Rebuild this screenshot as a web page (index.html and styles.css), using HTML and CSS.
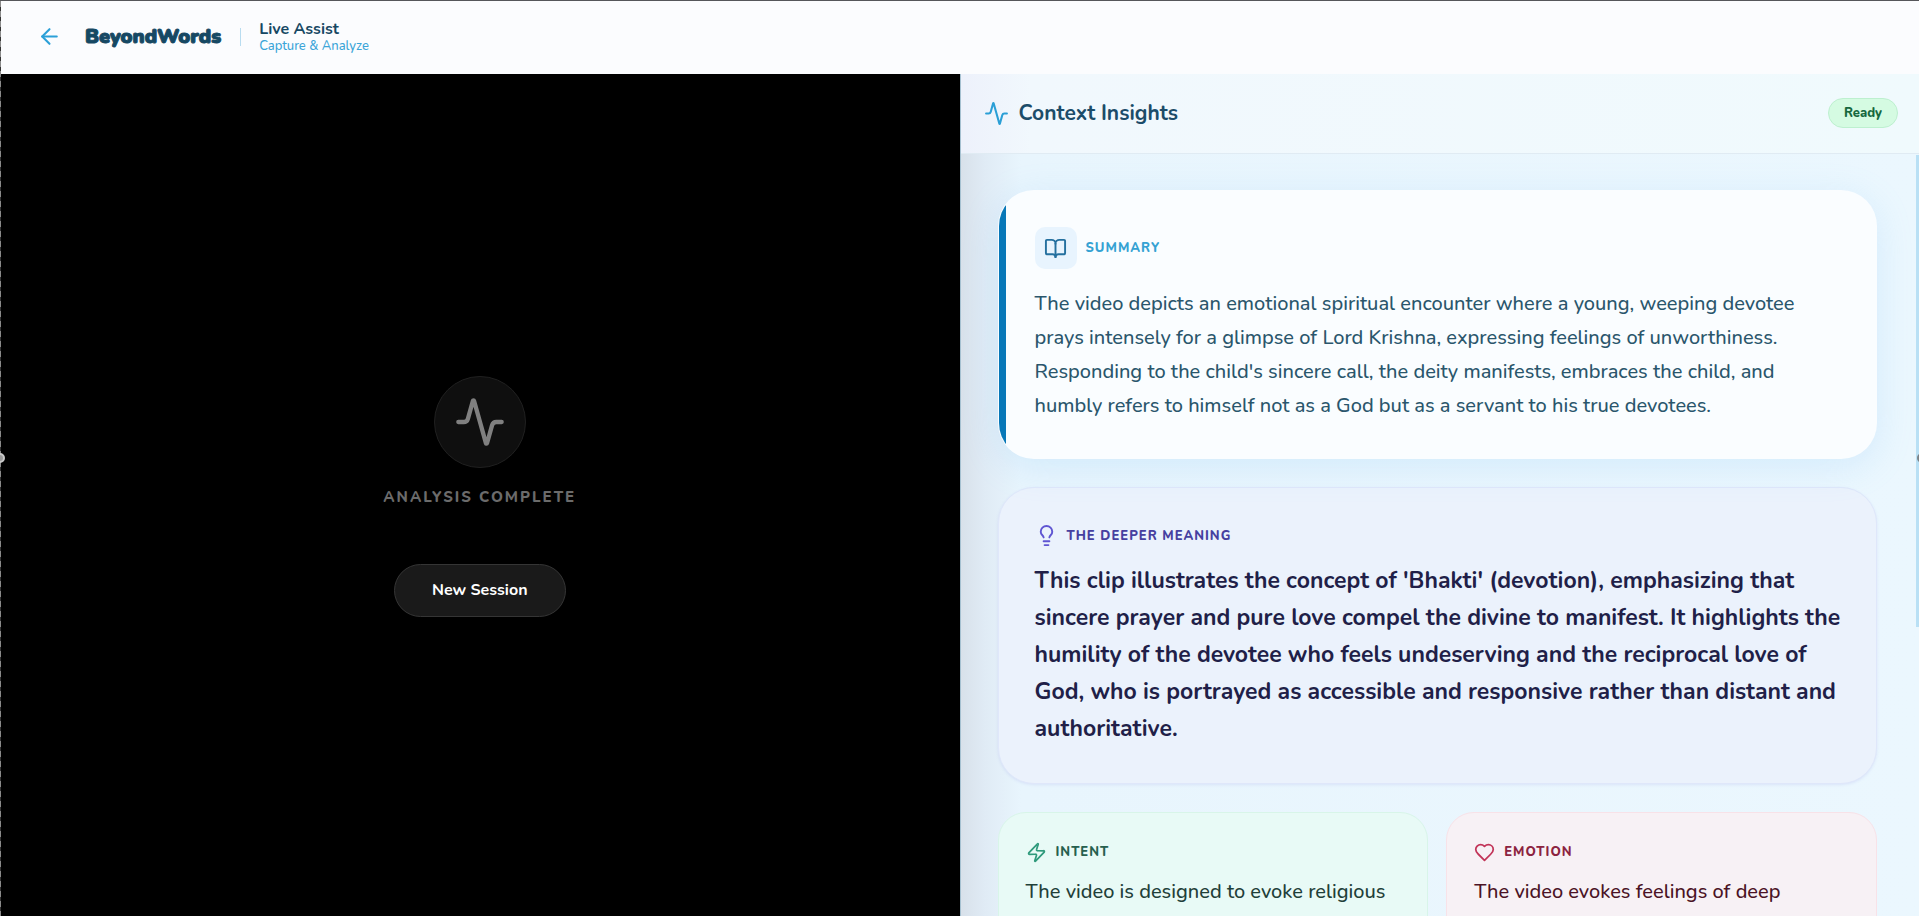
FILE: index.html
```html
<!DOCTYPE html>
<html lang="en">
<head>
    <meta charset="UTF-8">
    <meta name="viewport" content="width=device-width, initial-scale=1.0">
    <title>BeyondWords - Live Assist</title>
    <link rel="stylesheet" href="styles.css">
</head>
<body>
    <div class="app">
        <!-- Top bar -->
        <header class="topbar">
            <a href="#" class="back" aria-label="Back">
                <svg class="icon" viewBox="0 0 24 24"><path d="m12 19-7-7 7-7"/><path d="M19 12H5"/></svg>
            </a>
            <span class="logo">BeyondWords</span>
            <div class="page-name">
                <h1>Live Assist</h1>
                <p>Capture &amp; Analyze</p>
            </div>
        </header>

        <main class="main">
            <!-- Capture area -->
            <section class="stage">
                <div class="pulse">
                    <svg class="icon" viewBox="0 0 24 24"><path d="M22 12h-2.48a2 2 0 0 0-1.93 1.46l-2.35 8.36a.25.25 0 0 1-.48 0L9.24 2.18a.25.25 0 0 0-.48 0l-2.35 8.36A2 2 0 0 1 4.49 12H2"/></svg>
                </div>
                <p class="status">Analysis Complete</p>
                <button type="button" class="new-session">New Session</button>
            </section>

            <!-- Insights -->
            <section class="insights">
                <div class="insights-header">
                    <svg class="icon" viewBox="0 0 24 24"><path d="M22 12h-2.48a2 2 0 0 0-1.93 1.46l-2.35 8.36a.25.25 0 0 1-.48 0L9.24 2.18a.25.25 0 0 0-.48 0l-2.35 8.36A2 2 0 0 1 4.49 12H2"/></svg>
                    <h2>Context Insights</h2>
                    <span class="badge">Ready</span>
                </div>

                <div class="insights-body">
                    <article class="card summary">
                        <div class="card-label">
                            <span class="icon-box">
                                <svg class="icon" viewBox="0 0 24 24"><path d="M12 7v14"/><path d="M3 18a1 1 0 0 1-1-1V4a1 1 0 0 1 1-1h5a4 4 0 0 1 4 4 4 4 0 0 1 4-4h5a1 1 0 0 1 1 1v13a1 1 0 0 1-1 1h-6a3 3 0 0 0-3 3 3 3 0 0 0-3-3z"/></svg>
                            </span>
                            <h3>Summary</h3>
                        </div>
                        <p>The video depicts an emotional spiritual encounter where a young, weeping devotee prays intensely for a glimpse of Lord Krishna, expressing feelings of unworthiness. Responding to the child's sincere call, the deity manifests, embraces the child, and humbly refers to himself not as a God but as a servant to his true devotees.</p>
                    </article>

                    <article class="card meaning">
                        <div class="card-label">
                            <svg class="icon" viewBox="0 0 24 24"><path d="M15 14c.2-1 .7-1.7 1.5-2.5 1-.9 1.5-2.2 1.5-3.5A6 6 0 0 0 6 8c0 1 .2 2.2 1.5 3.5.7.7 1.3 1.5 1.5 2.5"/><path d="M9 18h6"/><path d="M10 22h4"/></svg>
                            <h3>The Deeper Meaning</h3>
                        </div>
                        <p>This clip illustrates the concept of 'Bhakti' (devotion), emphasizing that sincere prayer and pure love compel the divine to manifest. It highlights the humility of the devotee who feels undeserving and the reciprocal love of God, who is portrayed as accessible and responsive rather than distant and authoritative.</p>
                    </article>

                    <div class="card-grid">
                        <article class="card small intent">
                            <div class="card-label">
                                <svg class="icon" viewBox="0 0 24 24"><path d="M4 14a1 1 0 0 1-.78-1.63l9.9-10.2a.5.5 0 0 1 .86.46l-1.92 6.02A1 1 0 0 0 13 10h7a1 1 0 0 1 .78 1.63l-9.9 10.2a.5.5 0 0 1-.86-.46l1.92-6.02A1 1 0 0 0 11 14z"/></svg>
                                <h3>Intent</h3>
                            </div>
                            <p>The video is designed to evoke religious</p>
                        </article>
                        <article class="card small emotion">
                            <div class="card-label">
                                <svg class="icon" viewBox="0 0 24 24"><path d="M19 14c1.49-1.46 3-3.21 3-5.5A5.5 5.5 0 0 0 16.5 3c-1.76 0-3 .5-4.5 2-1.5-1.5-2.74-2-4.5-2A5.5 5.5 0 0 0 2 8.5c0 2.3 1.5 4.05 3 5.5l7 7Z"/></svg>
                                <h3>Emotion</h3>
                            </div>
                            <p>The video evokes feelings of deep</p>
                        </article>
                    </div>
                </div>
            </section>
        </main>
        <span class="handle handle-left"></span>
        <span class="handle handle-right"></span>
    </div>
</body>
</html>
```
FILE: styles.css
```css
* {
    box-sizing: border-box;
    margin: 0;
    padding: 0;
}
body {
    font-family: "Nunito", "Lato", sans-serif;
    color: #164863;
    background-color: #fbfcfe;
}
.app {
    position: relative;
    display: flex;
    flex-direction: column;
    height: 100vh;
    overflow: hidden;
    border-top: 1px solid #55565a;
}
/* dashed frame on the left edge */
.app::before {
    content: "";
    position: absolute;
    left: 0;
    top: 0;
    bottom: 0;
    width: 1px;
    background: repeating-linear-gradient(#8a8a8a 0 6px, #333 6px 10px);
    z-index: 2;
}
.handle {
    position: absolute;
    top: 50%;
    width: 10px;
    height: 10px;
    margin-top: -6px;
    border: 2px solid #c8c8c8;
    border-radius: 50%;
    background-color: #9a9a9a;
    z-index: 3;
}
.handle-left {
    left: -5px;
}
.handle-right {
    right: -8px;
    border-color: #7a8288;
}
.icon {
    display: block;
    fill: none;
    stroke: currentColor;
    stroke-width: 2;
    stroke-linecap: round;
    stroke-linejoin: round;
    flex-shrink: 0;
}

/* Top bar */
.topbar {
    display: flex;
    align-items: center;
    height: 73px;
    flex-shrink: 0;
    padding: 0 37px 2px;
    background-color: #fbfcfe;
}
.back {
    color: #2ba0d8;
    margin-right: 23px;
}
.back .icon {
    width: 25px;
    height: 25px;
}
.logo {
    font-size: 20px;
    font-weight: 900;
    line-height: 28px;
    color: #164863;
    -webkit-text-stroke: 1px #164863;
}
.page-name {
    position: relative;
    margin-left: 19px;
    padding-left: 19px;
}
.page-name::before {
    content: "";
    position: absolute;
    left: 0;
    top: 8px;
    width: 1px;
    height: 18px;
    background-color: #b8dcf0;
}
.page-name h1 {
    font-size: 16px;
    line-height: 18px;
    font-weight: 700;
}
.page-name p {
    font-size: 13px;
    line-height: 16px;
    font-weight: 500;
    color: #3ba5d8;
}

.main {
    display: grid;
    grid-template-columns: 1fr 1fr;
    flex: 1;
    min-height: 0;
}

/* Capture area */
.stage {
    display: flex;
    flex-direction: column;
    align-items: center;
    justify-content: center;
    padding-top: 2px;
    background-color: #000;
}
.pulse {
    display: flex;
    align-items: center;
    justify-content: center;
    width: 92px;
    height: 92px;
    border: 1px solid #202020;
    border-radius: 50%;
    background-color: #0f0f0f;
    color: #808080;
}
.pulse .icon {
    width: 52px;
    height: 52px;
}
.status {
    margin-top: 18px;
    font-size: 15px;
    line-height: 22px;
    font-weight: 800;
    letter-spacing: 2px;
    text-transform: uppercase;
    color: #6b6b6b;
}
.new-session {
    margin-top: 56px;
    padding: 0 37px;
    height: 53px;
    border: 1px solid #353535;
    border-radius: 27px;
    background-color: #1a1a1a;
    color: #fff;
    font-family: inherit;
    font-size: 16px;
    font-weight: 700;
    cursor: pointer;
}

/* Insights */
.insights {
    position: relative;
    display: flex;
    flex-direction: column;
    min-width: 0;
    min-height: 0;
    border-left: 1px solid #a5c0d0;
    background: linear-gradient(to right, #d8e1ea, #e0ebf5 24px, #e8f5fd 60px, #ebf7fe);
}
/* scroll thumb */
.insights::after {
    content: "";
    position: absolute;
    right: 0;
    top: 81px;
    width: 3px;
    height: 56%;
    background-color: #b9e0f5;
}
.insights-header {
    display: flex;
    align-items: center;
    gap: 10px;
    height: 80px;
    flex-shrink: 0;
    padding: 0 21px 1px 23px;
    border-bottom: 1px solid #e0ebf3;
    background: linear-gradient(to right, #edf1fb, #f1f8fd 70px, #f0fafd);
}
.insights-header .icon {
    width: 25px;
    height: 25px;
    color: #2b9fd6;
}
.insights-header h2 {
    flex: 1;
    font-size: 21px;
    line-height: 28px;
    font-weight: 700;
    color: #1c4c69;
}
.badge {
    padding: 0 15px;
    border: 1px solid #bdf0cf;
    border-radius: 16px;
    background-color: #d5fbe2;
    color: #17693f;
    font-size: 13px;
    line-height: 28px;
    font-weight: 800;
}
.insights-body {
    display: flex;
    flex-direction: column;
    gap: 28px;
    flex: 1;
    min-height: 0;
    overflow-y: auto;
    scrollbar-width: none;
    padding: 36px 42px 36px 37px;
}
.card {
    flex-shrink: 0;
    border: 1px solid transparent;
    border-radius: 36px;
    padding: 36px;
}
.card-label {
    display: flex;
    align-items: center;
    gap: 9px;
}
.card-label h3 {
    font-size: 13px;
    line-height: 22px;
    font-weight: 800;
    letter-spacing: 1px;
    text-transform: uppercase;
}
.card-label .icon {
    width: 23px;
    height: 23px;
}
.card p {
    font-size: 20px;
    line-height: 34px;
    font-weight: 500;
}
.summary {
    position: relative;
    overflow: hidden;
    padding-bottom: 35px;
    background-color: #fafdff;
    box-shadow: 0 8px 36px rgba(120, 190, 245, 0.2);
}
.summary::before {
    content: "";
    position: absolute;
    left: -1px;
    top: -1px;
    bottom: -1px;
    width: 8px;
    background-color: #0878b8;
}
.summary .icon-box {
    display: flex;
    align-items: center;
    justify-content: center;
    width: 42px;
    height: 42px;
    border-radius: 10px;
    background-color: #e8f4fe;
    color: #25709f;
}
.summary h3 {
    color: #35a2d3;
}
.summary p {
    margin-top: 18px;
    color: #2a566c;
}
.meaning {
    padding-right: 30px;
    border-color: #dfe7fa;
    background-color: #ebf2fc;
    box-shadow: 0 1px 3px rgba(120, 130, 220, 0.15);
}
.meaning .icon {
    color: #5f55d2;
}
.meaning h3 {
    color: #4640a0;
}
.card.meaning p {
    margin-top: 15px;
    font-size: 23px;
    line-height: 37px;
    font-weight: 700;
    color: #211f48;
}
.card-grid {
    display: grid;
    grid-template-columns: 1fr 1fr;
    gap: 18px;
    flex-shrink: 0;
}
.small {
    min-height: 544px;
    border-radius: 28px;
    padding: 28px 27px;
}
.small .icon {
    width: 21px;
    height: 21px;
}
.small p {
    margin-top: 12px;
}
.intent {
    border-color: #d8f5e9;
    background-color: #e8faf6;
}
.intent .icon {
    color: #2f9a7c;
}
.intent h3 {
    color: #27604f;
}
.intent p {
    color: #1f4039;
}
.emotion {
    border-color: #f8e2e8;
    background-color: #f7f1f5;
}
.emotion .icon {
    color: #c23458;
}
.emotion h3 {
    color: #8c2340;
}
.emotion p {
    color: #4b1325;
}
```
